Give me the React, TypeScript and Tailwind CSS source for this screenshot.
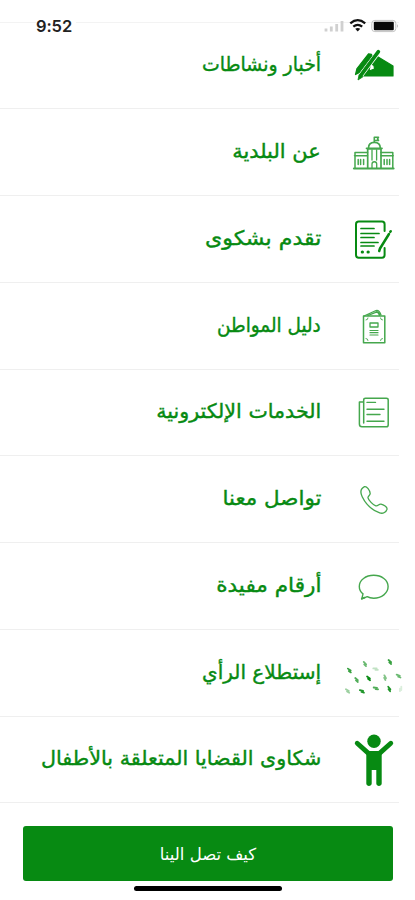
import type { ReactNode } from "react";

interface MenuItem {
  label: string;
  // horizontal fit of the label
  fit: string;
  icon: ReactNode;
}

const GREEN = "#078a12";

function Icon({ children, soft = false }: { children: ReactNode; soft?: boolean }) {
  return (
    <svg
      className={`w-[60px] h-[60px] shrink-0 overflow-visible ${soft ? "opacity-75" : ""}`}
      viewBox="0 0 60 60"
      fill="none"
      stroke={GREEN}
      strokeLinecap="round"
      strokeLinejoin="round"
    >
      {children}
    </svg>
  );
}

function WritingHand() {
  return (
    <Icon>
      <path d="M24.5 17.8 27.5 18.3 28 20 15.5 36.5 11.5 38.5 13 32.5Z" fill={GREEN} strokeWidth="1.2" />
      <path d="M32.5 20 49 30V40H19L26 30 25 35 30.5 33 30 29.5 27.5 28Z" fill={GREEN} strokeWidth="1.2" />
      <path d="M34.6 15.8 16 40.5" stroke="white" strokeWidth="4.8" />
      <path d="M34.4 15.6 16.8 39.4" strokeWidth="3.6" />
      <path d="M15 39 14 44 18.6 41Z" fill={GREEN} strokeWidth="0.8" />
    </Icon>
  );
}

function TownHall() {
  return (
    <Icon soft>
      <path d="M10 45.5H49.5" strokeWidth="2.2" />
      <path d="M11 45V29.5H23.5M37 29.5H48.8V45M10.5 32.8H23.5M37 32.8H49.3" strokeWidth="1.5" />
      <path d="M23.7 45V26H37V45M22.5 25.3H38M24.5 25C24.5 21 27 19.3 30.3 19.3S36.3 21 36.3 25" strokeWidth="1.7" />
      <path d="M30.3 19V14.2H34.5L33.5 16 34.5 17.5H30.5" strokeWidth="1.6" />
      <path d="M28 27V37M32.6 27V37M28 45V41C28 38 32.7 38 32.7 41V45" strokeWidth="1.3" />
      <path d="M14.2 36.5V41.5M16.6 36.5V41.5M19.6 36.5V41.5M40.2 36.5V41.5M43 36.5V41.5M45.6 36.5V41.5" strokeWidth="1.5" />
    </Icon>
  );
}

function Complaint() {
  return (
    <Icon>
      <path d="M40.6 21V14.2Q40.6 11.5 38 11.5H14.7Q12 11.5 12 14.2V45Q12 47.7 14.7 47.7H38Q40.6 47.7 40.6 45V38" strokeWidth="2" />
      <path d="M17 18.5H30M17 23.5H35M17 27.5H30M17 32.5H34M17 36H30" strokeWidth="1.7" />
      <path d="M18.2 42H18.5M24 42H24.3" strokeWidth="3" />
      <path d="M45 24 36 38.5 35.2 41" strokeWidth="2.5" />
      <path d="M46.3 21.8 46.7 21.3" strokeWidth="2.6" />
    </Icon>
  );
}

function Guide() {
  return (
    <Icon soft>
      <path d="M19.5 20H40.8V46.7H19.5Z" strokeWidth="1.5" />
      <path d="M20 20 32 14.5Q35 13.5 37 19M24 19.5 33 15.8" strokeWidth="1.3" />
      <path d="M32.5 16.2Q35 16 35.5 19" strokeWidth="1.8" />
      <path d="M22 24Q24 24 24 22M36.5 22Q36.5 24 38.5 24M22 42.5Q24 42.5 24 44.5M36.5 44.5Q36.5 42.5 38.5 42.5" strokeWidth="0.9" />
      <path d="M26 27H34V31H26Z" strokeWidth="1.3" />
      <path d="M26 34.5H34M26 36.7H34M26 39H34" strokeWidth="1.2" />
    </Icon>
  );
}

function News() {
  return (
    <Icon soft>
      <path d="M19.7 40V17Q19.7 15.3 21.5 15.3H42.3Q44.2 15.3 44.2 17V42Q44.2 43.8 42.3 43.8H18Q15.4 43.8 15.4 41V19H19" strokeWidth="1.5" />
      <path d="M23 19.4H31.5M23 26.2H40M23 31.5H36M23 38.2H40" strokeWidth="1.4" />
    </Icon>
  );
}

function Phone() {
  return (
    <Icon soft>
      <path
        d="M20.5 16.7C17 18.5 16 22.3 18.2 26.8C21.7 34 28.4 40.4 35.7 42.9C39.3 44.1 42.2 41.8 43 39.2C43.5 37 39.5 34.7 37 34.2C34.8 33.8 34 36.4 31.8 35.8C29 35 24.5 30 24 27.8C23.6 26 26.3 25.5 26.2 23.5C26 20.5 22.7 16 20.5 16.7Z"
        strokeWidth="1.3"
      />
    </Icon>
  );
}

function Bubble() {
  return (
    <Icon soft>
      <path d="M17.8 41.9 19 36.9C16.6 34.9 15.3 32.2 15.3 29.4C15.3 23 21.8 18.3 29.7 18.3S44.1 23 44.1 29.6S37.6 41.2 29.7 41.2C27.2 41.2 25 40.7 23.2 39.7Z" strokeWidth="1.4" />
      <path d="M17.8 41.7 20.5 40.7" strokeWidth="1.8" />
    </Icon>
  );
}

const MARKS = [
  { x: 21, y: 21, r: 45, o: 0.6 },
  { x: 46, y: 19, r: 40, o: 0.8 },
  { x: 5.5, y: 27.5, r: 35, o: 0.8 },
  { x: 31.7, y: 26, r: 0, o: 0.25 },
  { x: 12.7, y: 37, r: 40, o: 0.7 },
  { x: 24.7, y: 35.3, r: 35, o: 1 },
  { x: 41, y: 34.7, r: 60, o: 0.5 },
  { x: 54.7, y: 33, r: 20, o: 0.6 },
  { x: 3.7, y: 48, r: 30, o: 0.4 },
  { x: 18, y: 48.3, r: 15, o: 0.9 },
  { x: 32, y: 45.3, r: 5, o: 0.7 },
  { x: 45.3, y: 46, r: 50, o: 0.9 },
  { x: 56.7, y: 46, r: 90, o: 0.15 },
];

function Survey() {
  return (
    <Icon>
      {MARKS.map((m, i) => (
        <path
          key={i}
          d="M-2.4 -0.6H1M-0.3 0.8H2.2"
          strokeWidth="1.8"
          opacity={m.o}
          transform={`translate(${m.x} ${m.y}) rotate(${m.r})`}
        />
      ))}
    </Icon>
  );
}

function Child() {
  return (
    <Icon>
      <circle cx="30" cy="11.3" r="6.7" fill={GREEN} stroke="none" />
      <path d="M13.2 13.2 24.5 23.4H35.5L46.8 13.2" strokeWidth="4.8" />
      <path d="M24.5 21.4H35.5L37.7 24.4V53.6C37.7 56.9 32.3 56.9 32.3 53.6V39.9H27.7V53.6C27.7 56.9 22.3 56.9 22.3 53.6V24.4Z" fill={GREEN} stroke="none" />
    </Icon>
  );
}

const ITEMS: MenuItem[] = [
  { label: "أخبار ونشاطات", fit: "scale-x-[0.945]", icon: <WritingHand /> },
  { label: "عن البلدية", fit: "scale-x-[1.045]", icon: <TownHall /> },
  { label: "تقدم بشكوى", fit: "scale-x-[1.105]", icon: <Complaint /> },
  { label: "دليل المواطن", fit: "scale-x-[0.92]", icon: <Guide /> },
  { label: "الخدمات الإلكترونية", fit: "scale-x-[1.03]", icon: <News /> },
  { label: "تواصل معنا", fit: "scale-x-[1.07]", icon: <Phone /> },
  { label: "أرقام مفيدة", fit: "scale-x-[1.08]", icon: <Bubble /> },
  { label: "إستطلاع الرأي", fit: "scale-x-100", icon: <Survey /> },
  { label: "شكاوى القضايا المتعلقة بالأطفال", fit: "scale-x-[1.033]", icon: <Child /> },
];

function StatusBar() {
  return (
    <div className="h-[22.5px] w-[399px] border-b border-[#f3f3f3]">
      <div className="relative top-[16px] flex h-[20px] items-center justify-between pl-[36px]">
        <span className="bg-white pr-1 font-['Inter'] text-[16.5px] font-semibold leading-none tracking-[-0.1px] text-[#222]">
          9:52
        </span>
        <svg className="h-[20px] w-[78px]" viewBox="321 16 78 20" fill="none">
          <path d="M326 31.5V28.5M331.3 31.5V26.5M336.7 31.5V24M342 31.5V21" stroke="#d0d0d0" strokeWidth="2.8" />
          <g stroke="#111" strokeWidth="2.3">
            <path d="M350.3 23.3Q357.7 17 365.2 23.3" />
            <path d="M353.3 26.7Q357.7 23 362.2 26.7" />
          </g>
          <path d="M355.2 28.8Q357.7 27 360.3 28.8L357.7 31.6Z" fill="#111" />
          <rect x="371.8" y="20.4" width="24" height="11.2" rx="3" stroke="#c4c4c4" strokeWidth="1" />
          <rect x="373.8" y="21.8" width="20" height="8.4" rx="1" fill="#0a0a0a" />
          <path d="M397 24V28Q398.7 26 397 24Z" fill="#aaa" />
        </svg>
      </div>
    </div>
  );
}

export default function App() {
  return (
    <div className="h-[900px] w-[415px] overflow-hidden bg-white font-['DejaVu_Sans',sans-serif]">
      <StatusBar />
      <nav>
        {ITEMS.map((item) => (
          <div
            key={item.label}
            dir="rtl"
            className="flex h-[86.75px] w-[399px] items-center border-b border-[#efefef]"
          >
            <div className="-mr-[5px] pt-[1.5px]">{item.icon}</div>
            <span
              className={`mr-[23px] origin-right whitespace-nowrap pb-[2px] text-[20px] leading-none text-[#078a12] [-webkit-text-stroke:0.4px_#078a12] ${item.fit}`}
            >
              {item.label}
            </span>
          </div>
        ))}
      </nav>
      <button
        type="button"
        className="ml-[23px] mt-[22.75px] flex h-[55px] w-[370px] items-center justify-center rounded-[3px] bg-[#078a12] pt-[4px] text-[16.5px] leading-none text-white"
      >
        <span dir="rtl">كيف تصل الينا</span>
      </button>
      <div className="ml-[134px] mt-[5px] h-[5px] w-[148px] rounded-full bg-black" />
    </div>
  );
}
